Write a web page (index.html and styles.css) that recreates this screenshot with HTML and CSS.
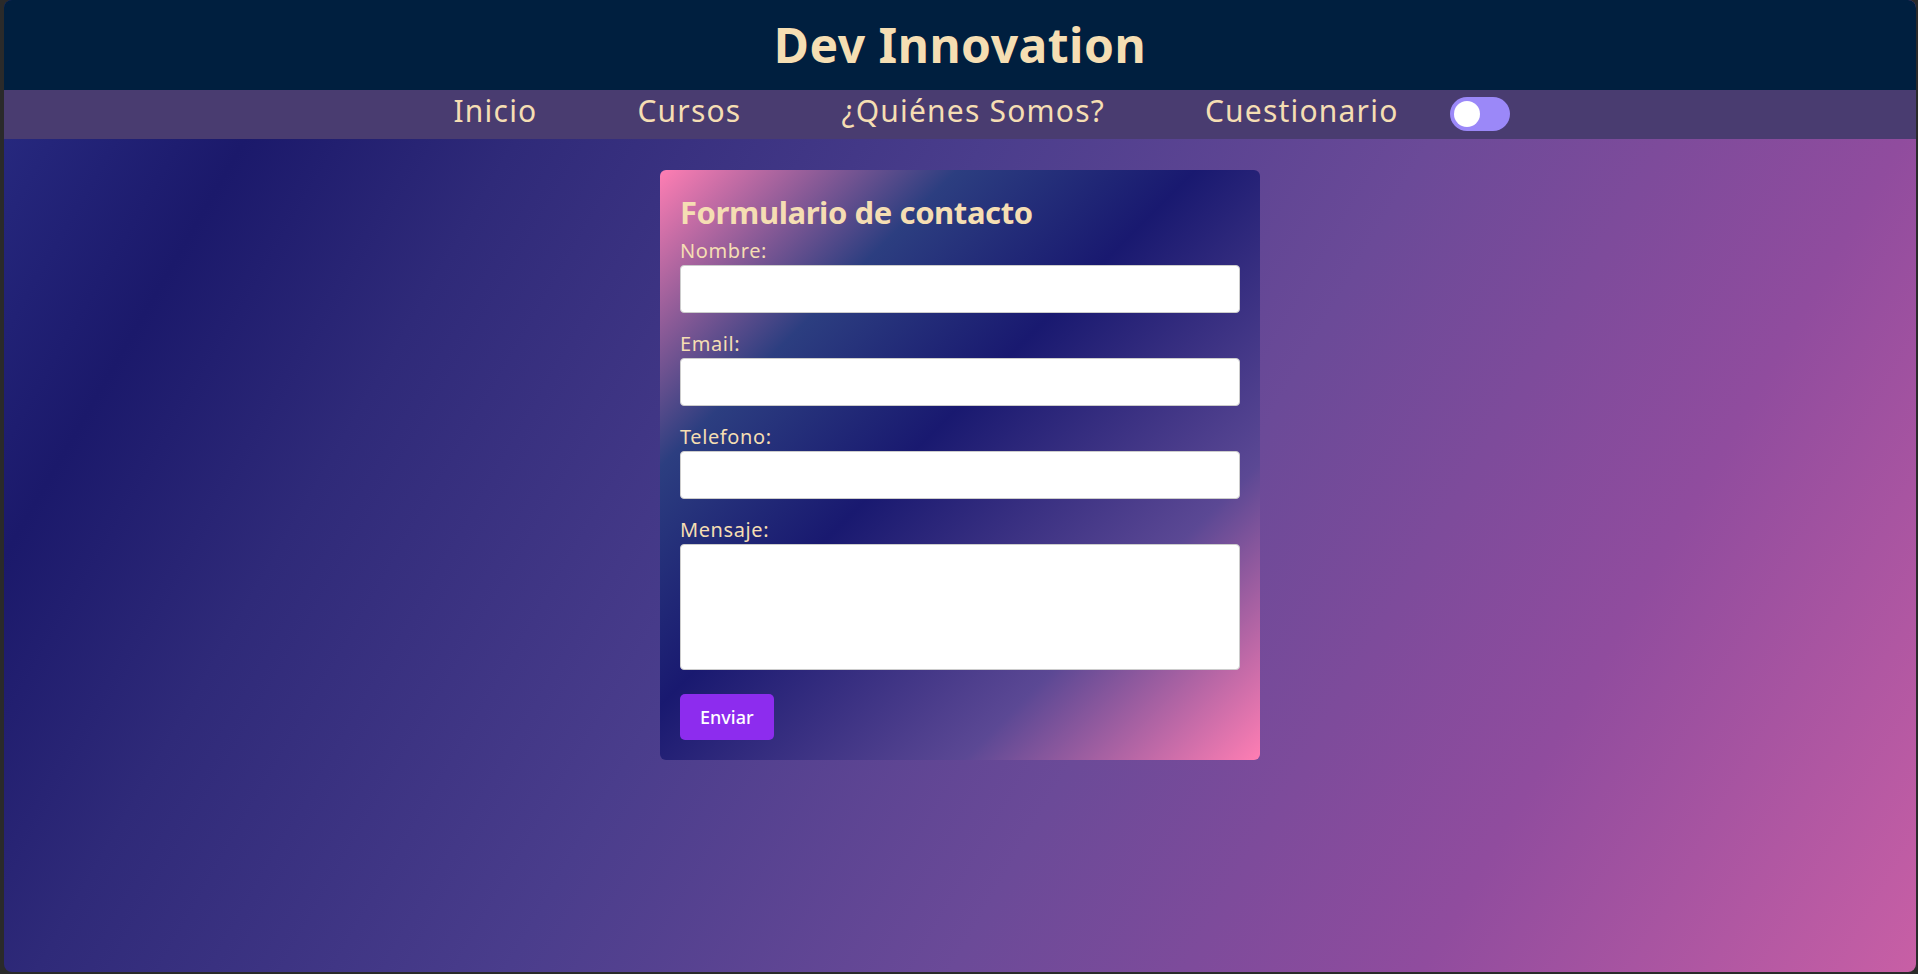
FILE: index.html
```html
<!DOCTYPE html>
<html lang="es">
<head>
<meta charset="utf-8">
<title>Dev Innovation</title>
<link rel="stylesheet" href="styles.css">
</head>
<body>
<div class="frame">
  <header class="site-header">
    <h1 class="brand">Dev Innovation</h1>
  </header>
  <nav class="site-nav">
    <a class="nav-link" href="#">Inicio</a>
    <a class="nav-link" href="#">Cursos</a>
    <a class="nav-link" href="#">¿Quiénes Somos?</a>
    <a class="nav-link" href="#">Cuestionario</a>
    <label class="switch">
      <input class="switch-input" type="checkbox">
      <span class="slider"></span>
    </label>
  </nav>
  <main class="content">
    <form class="contact-card">
      <h2 class="card-title">Formulario de contacto</h2>
      <label class="field-label" for="nombre">Nombre:</label>
      <input class="field" id="nombre" type="text">
      <label class="field-label" for="email">Email:</label>
      <input class="field" id="email" type="email">
      <label class="field-label" for="telefono">Telefono:</label>
      <input class="field" id="telefono" type="tel">
      <label class="field-label" for="mensaje">Mensaje:</label>
      <textarea class="field field-area" id="mensaje"></textarea>
      <button class="submit" type="button">Enviar</button>
    </form>
  </main>
</div>
</body>
</html>
```
FILE: styles.css
```css
html {
  background: #2a2a2a;
  height: 100%;
}

body {
  margin: 0;
  height: 100%;
  font-family: "Noto Sans", "DejaVu Sans", sans-serif;
}

.frame {
  margin: 0 2px 2px 4px;
  height: calc(100vh - 2px);
  border-radius: 8px;
  overflow: hidden;
  display: flex;
  flex-direction: column;
  background: linear-gradient(120deg, #2a2d84 0%, #1b196b 13%, #2f2a79 24%, #4a3d8c 43%, #6b4a98 61%, #904c9e 80%, #c85fa5 100%);
}

.site-header {
  background: #001f3f;
  height: 90px;
  display: flex;
  justify-content: center;
  flex-shrink: 0;
}

.brand {
  margin: 0;
  font-size: 48px;
  line-height: 90px;
  font-weight: 700;
  color: #f5deb3;
  letter-spacing: 0.5px;
}

.site-nav {
  background: #493c70;
  height: 49px;
  display: flex;
  justify-content: center;
  align-items: center;
  flex-shrink: 0;
}

.nav-link {
  color: #f5deb3;
  text-decoration: none;
  font-size: 30px;
  line-height: 42px;
  padding: 0 50px;
  margin-bottom: 7px;
  letter-spacing: 1.2px;
}

.switch {
  position: relative;
  display: inline-block;
  width: 60px;
  height: 34px;
  margin: 0 7px 2px 1px;
}

.switch-input {
  opacity: 0;
  width: 0;
  height: 0;
  position: absolute;
}

.slider {
  position: absolute;
  inset: 0;
  background: #9b88f8;
  border-radius: 34px;
}

.slider::before {
  content: "";
  position: absolute;
  width: 26px;
  height: 26px;
  left: 4px;
  top: 4px;
  background: #ffffff;
  border-radius: 50%;
}

.content {
  flex: 1;
  padding-top: 31px;
  display: flex;
  justify-content: center;
  align-items: flex-start;
}

.contact-card {
  width: 600px;
  box-sizing: border-box;
  padding: 20px;
  border-radius: 6px;
  background: linear-gradient(135deg, #ff7eb3 0%, #2c3e80 25%, #191970 45%, #5b4894 75%, #ff7eb3 100%);
  display: flex;
  flex-direction: column;
  align-items: flex-start;
}

.card-title {
  margin: 0 0 5px;
  padding-top: 2px;
  font-size: 31px;
  line-height: 40px;
  font-weight: 700;
  color: #f5deb3;
  letter-spacing: -0.4px;
}

.field-label {
  font-size: 20px;
  line-height: 28px;
  color: #f5deb3;
  letter-spacing: 0.6px;
}

.field {
  display: block;
  width: 100%;
  box-sizing: border-box;
  height: 48px;
  margin: 0 0 17px;
  padding: 0 10px;
  border: 1px solid #cccccc;
  border-radius: 4px;
  background: #ffffff;
  font-family: inherit;
  font-size: 16px;
}

.field-area {
  height: 126px;
  margin-bottom: 24px;
  resize: none;
}

.submit {
  height: 46px;
  padding: 0 20px;
  border: none;
  border-radius: 5px;
  background: #8d2cee;
  color: #ffffff;
  font-family: inherit;
  font-size: 18px;
  font-weight: 500;
}
```
